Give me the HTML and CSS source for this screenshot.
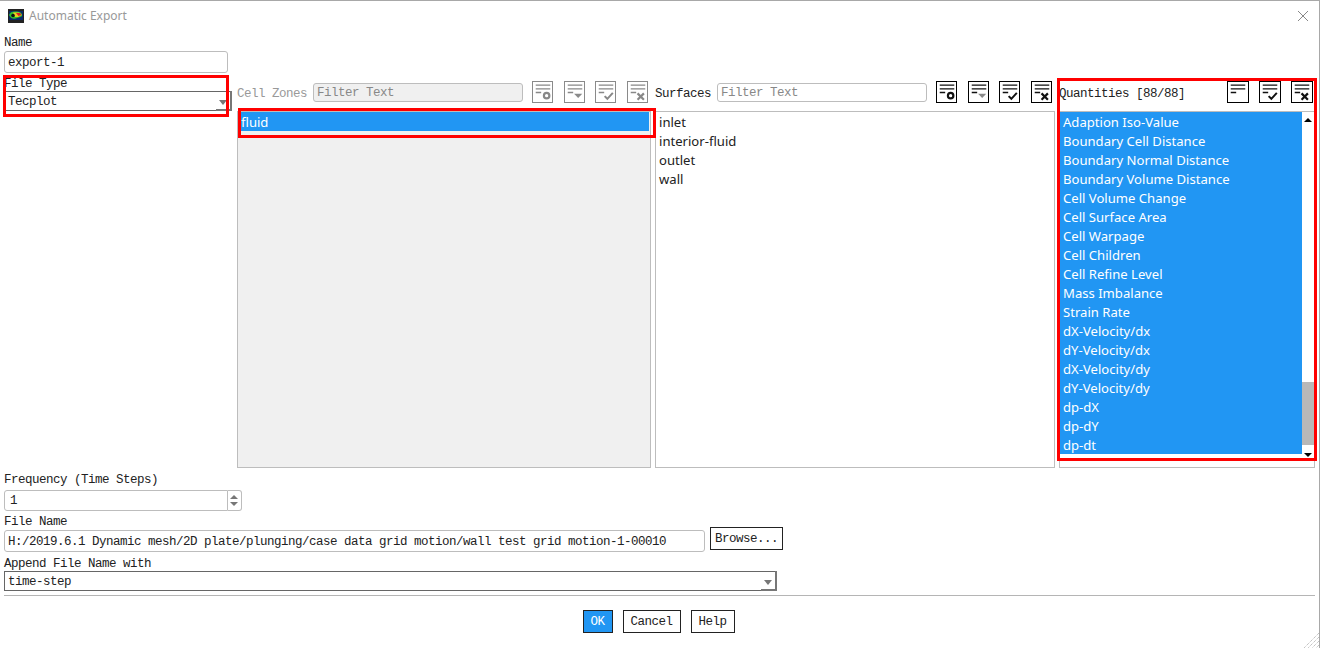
FILE: index.html
```html
<!DOCTYPE html>
<html lang="en">
<head>
<meta charset="utf-8">
<title>Automatic Export</title>
<link rel="stylesheet" href="styles.css">
</head>
<body>
<svg class="defs" width="0" height="0" aria-hidden="true">
  <symbol id="lines" viewBox="0 0 22 22"><path d="M3 3.500h16M3 7.500h16M3 11.500h6" fill="none" stroke="currentColor" stroke-width="1.500"/></symbol>
  <symbol id="i-add" viewBox="0 0 22 22"><use href="#lines"/><circle cx="15" cy="15" r="3" fill="none" stroke="currentColor" stroke-width="2.400"/></symbol>
  <symbol id="i-down" viewBox="0 0 22 22"><use href="#lines"/><path d="M10 13h9l-4.500 4.500z" fill="#8a8a8a"/></symbol>
  <symbol id="i-check" viewBox="0 0 22 22"><use href="#lines"/><path d="M9.500 15.500l3 3 6-6.500" fill="none" stroke="currentColor" stroke-width="2.200"/></symbol>
  <symbol id="i-x" viewBox="0 0 22 22"><use href="#lines"/><path d="M10.500 12.500l7 7M17.500 12.500l-7 7" fill="none" stroke="currentColor" stroke-width="2.400"/></symbol>
  <symbol id="i-none" viewBox="0 0 22 22"><use href="#lines"/></symbol>
</svg>
<div class="dialog">
  <header class="titlebar">
    <svg class="appicon" width="16" height="14" viewBox="0 0 16 14" aria-hidden="true">
      <rect width="16" height="14" fill="#222"/>
      <rect x="1" y="2" width="14" height="9" fill="#0a2a6a"/>
      <path d="M1 6c1-3 4-4 7-3.500 3 0 6 1 6 3.500s-3 2-5 3-6 1.500-8-3z" fill="#2fc02f"/>
      <path d="M5 3.500h6l3 2.500-4 2H7z" fill="#e8d020"/>
      <path d="M8 4h4l1.500 2-3 1z" fill="#e02020"/>
      <circle cx="5" cy="6.500" r="1.800" fill="#111"/>
    </svg>
    <span class="title">Automatic Export</span>
    <svg class="close" width="12" height="12" viewBox="0 0 12 12" aria-hidden="true"><path d="M1 1l10 10M11 1L1 11" stroke="#888" stroke-width="1" fill="none"/></svg>
  </header>

  <div class="main">
    <div class="leftcol">
      <label class="lbl">Name</label>
      <div class="input name">export-1</div>
      <label class="lbl filetype">File Type</label>
      <div class="combo ftcombo">Tecplot<span class="caret"></span></div>
    </div>

    <section class="panel zones">
      <div class="tools">
        <span class="lbl dim">Cell Zones</span>
        <div class="filter off">Filter Text</div>
        <span class="ibtn off"><svg><use href="#i-add"/></svg></span>
        <span class="ibtn off"><svg><use href="#i-down"/></svg></span>
        <span class="ibtn off"><svg><use href="#i-check"/></svg></span>
        <span class="ibtn off"><svg><use href="#i-x"/></svg></span>
      </div>
      <ul class="list grey"><li class="sel">fluid</li></ul>
    </section>

    <section class="panel surfaces">
      <div class="tools">
        <span class="lbl">Surfaces</span>
        <div class="filter">Filter Text</div>
        <span class="ibtn"><svg><use href="#i-add"/></svg></span>
        <span class="ibtn"><svg><use href="#i-down"/></svg></span>
        <span class="ibtn"><svg><use href="#i-check"/></svg></span>
        <span class="ibtn"><svg><use href="#i-x"/></svg></span>
      </div>
      <ul class="list"><li>inlet</li><li>interior-fluid</li><li>outlet</li><li>wall</li></ul>
    </section>

    <section class="panel quantities">
      <div class="tools">
        <span class="lbl grow">Quantities [88/88]</span>
        <span class="ibtn"><svg><use href="#i-none"/></svg></span>
        <span class="ibtn"><svg><use href="#i-check"/></svg></span>
        <span class="ibtn"><svg><use href="#i-x"/></svg></span>
      </div>
      <div class="qbox">
        <ul class="qlist">
          <li>Adaption Iso-Value</li><li>Boundary Cell Distance</li><li>Boundary Normal Distance</li><li>Boundary Volume Distance</li><li>Cell Volume Change</li><li>Cell Surface Area</li><li>Cell Warpage</li><li>Cell Children</li><li>Cell Refine Level</li><li>Mass Imbalance</li><li>Strain Rate</li><li>dX-Velocity/dx</li><li>dY-Velocity/dx</li><li>dX-Velocity/dy</li><li>dY-Velocity/dy</li><li>dp-dX</li><li>dp-dY</li><li>dp-dt</li>
        </ul>
        <div class="scroll">
          <span class="arrow up"></span>
          <span class="thumb"></span>
          <span class="arrow dn"></span>
        </div>
      </div>
    </section>
  </div>

  <div class="lower">
    <label class="lbl">Frequency (Time Steps)</label>
    <div class="spin">
      <div class="input spinval">1</div>
      <div class="spinbtn"><span class="tri-up"></span><span class="tri-dn"></span></div>
    </div>
    <label class="lbl fname">File Name</label>
    <div class="filerow">
      <div class="input path">H:/2019.6.1 Dynamic mesh/2D plate/plunging/case data grid motion/wall test grid motion-1-00010</div>
      <button class="btn browse">Browse...</button>
    </div>
    <label class="lbl append">Append File Name with</label>
    <div class="combo appcombo">time-step<span class="caret"></span></div>
  </div>

  <footer class="footer">
    <button class="btn ok">OK</button>
    <button class="btn cancel">Cancel</button>
    <button class="btn help">Help</button>
  </footer>

  <div class="mark m1"></div>
  <div class="mark m2"></div>
  <div class="mark m3"></div>
  <svg class="grip" width="16" height="16" viewBox="0 0 16 16" aria-hidden="true"><path d="M16 1L1 16M16 5L5 16M16 9L9 16M16 13L13 16" stroke="#aaa" stroke-width="1" stroke-dasharray="1 1" fill="none"/></svg>
</div>
</body>
</html>
```

FILE: styles.css
```css
* { box-sizing: border-box; }
html, body { margin: 0; padding: 0; background: #fff; }
body { width: 1320px; height: 648px; overflow: hidden; }
.defs { position: absolute; }
ul { list-style: none; margin: 0; padding: 0; }

.dialog {
  position: relative;
  width: 1320px;
  height: 648px;
  background: #fff;
  border-top: 1px solid #a8a8a8;
  border-right: 1px solid #a8a8a8;
  font-family: "Liberation Mono", monospace;
  font-size: 12.5px;
  letter-spacing: -0.5px;
  color: #222;
}

.titlebar { display: flex; align-items: center; height: 30px; padding: 0 10px 1px 8px; }
.appicon { flex: none; }
.title { margin-left: 5px; flex: 1; font-family: "Noto Sans", sans-serif; font-size: 12px; letter-spacing: 0; color: #999; }
.close { flex: none; }

.lbl { display: block; height: 14px; line-height: 16px; white-space: nowrap; }
.dim { color: #999; }
.grow { flex: 1; }

.main { display: flex; height: 441px; padding-left: 4px; padding-top: 4px; }
.leftcol { width: 233px; flex: none; }

.input {
  border: 1px solid #bdbdbd;
  border-radius: 3px;
  background: #fff;
  padding-left: 3px;
  white-space: nowrap;
  overflow: hidden;
}
.name { width: 224px; height: 22px; margin-top: 2px; line-height: 22px; }
.filetype { margin-top: 3px; }

.combo {
  position: relative;
  border: 1px solid #666;
  border-width: 1px 0 1px 1px;
  padding-left: 3px;
  line-height: 21px;
  background: #fff;
}
.caret {
  position: absolute;
  right: 0;
  top: -1px;
  bottom: -1px;
  width: 16px;
  border-right: 2px solid #777;
  border-bottom: 2px solid #777;
}
.caret::after {
  content: "";
  position: absolute;
  right: 3px;
  top: 9px;
  border: 4px solid transparent;
  border-top: 5px solid #777;
  border-bottom: 0;
}
.ftcombo { width: 228px; height: 20px; margin-top: 1px; }

.panel { display: flex; flex-direction: column; flex: none; margin-right: 4px; margin-top: 46px; }
.zones { width: 414px; }
.surfaces { width: 400px; }
.quantities { width: 256px; margin-right: 0; }

.tools { display: flex; align-items: center; gap: 10.67px; height: 22px; margin-bottom: 8px; }
.tools .lbl { margin-top: 2px; margin-right: -10.67px; }
.tools .grow { margin-right: 0; }
.filter {
  height: 19px;
  margin-top: 1px;
  border: 1px solid #bdbdbd;
  border-radius: 3px;
  color: #888;
  padding-left: 3px;
  line-height: 19px;
  margin-left: 6px;
  margin-right: -2px;
  flex: 1;
}
.filter.off { background: #f0f0f0; }
.ibtn {
  flex: none;
  width: 21px;
  height: 22px;
  border: 1px solid #000;
  color: #111;
}
.ibtn:last-child { margin-right: 3px; }
.ibtn svg { display: block; width: 20px; height: 20px; }
.ibtn.off { border-color: #8a8a8a; color: #888; }
.quantities .tools { gap: 10px; }
.quantities .ibtn { width: 22px; }
.quantities .ibtn:last-child { margin-right: 2px; }

.list {
  height: 357px;
  border: 1px solid #bdbdbd;
  padding: 1px 0 0 0;
  font-family: "Noto Sans", sans-serif;
  font-size: 13.1px;
  letter-spacing: 0;
  line-height: 19px;
  color: #222;
}
.list li { padding-left: 3px; }
.list.grey { background: #f0f0f0; padding: 0 1px 0 2px; }
.list .sel { background: #2196f3; color: #fff; height: 19px; line-height: 19px; padding: 1px 0 0 1px; }

.qbox {
  display: flex;
  height: 357px;
  border: 1px solid #bdbdbd;
  font-family: "Noto Sans", sans-serif;
  font-size: 13.1px;
  letter-spacing: 0;
  line-height: 19px;
}
.qlist {
  width: 242px;
  height: 342px;
  background: #2196f3;
  color: #fff;
  padding-top: 1px;
}
.qlist li { padding-left: 3px; white-space: nowrap; }
.scroll { position: relative; flex: 1; height: 347px; }
.thumb { position: absolute; left: 0; right: 0; top: 270px; height: 63px; background: #b8b8b8; }
.arrow { position: absolute; left: 2px; border: 4px solid transparent; }
.up { top: 6px; border-top: 0; border-bottom: 4px solid #000; }
.dn { top: 341px; border-bottom: 0; border-top: 4px solid #000; }

.lower { padding: 0 0 0 4px; }
.spin { display: flex; width: 238px; height: 21px; margin-top: 4px; }
.spinval { flex: 1; line-height: 21px; border-radius: 3px 0 0 3px; padding-left: 5px; }
.spinbtn {
  position: relative;
  width: 14px;
  border: 1px solid #bdbdbd;
  border-left: 0;
  border-radius: 0 3px 3px 0;
}
.tri-up, .tri-dn { position: absolute; left: 2px; border: 4px solid transparent; }
.tri-up { top: 4px; border-top: 0; border-bottom: 4px solid #777; }
.tri-dn { top: 11px; border-bottom: 0; border-top: 4px solid #777; }

.fname { margin-top: 3px; }
.filerow { display: flex; align-items: flex-start; height: 26px; }
.path { width: 701px; height: 22px; margin-top: 2px; line-height: 22px; }
.btn {
  font-family: "Liberation Mono", monospace;
  font-size: 12.5px;
  letter-spacing: -0.5px;
  color: #222;
  background: #fff;
  border: 1px solid #222;
  border-radius: 0;
  padding: 0;
  height: 23px;
}
.browse { width: 73px; margin-left: 5px; margin-top: -1px; padding-top: 1px; }
.append { margin-top: 2px; }
.appcombo { width: 773px; height: 20px; margin-top: 1px; }

.footer {
  display: flex;
  justify-content: center;
  gap: 10px;
  margin: 4px 4px 0 4px;
  padding: 14px 2px 0 0;
  border-top: 1px solid #b5b5b5;
}
.ok { width: 30px; background: #2196f3; color: #fff; }
.cancel { width: 58px; }
.help { width: 44px; }

.mark { position: absolute; border: 3px solid #f00; pointer-events: none; }
.m1 { left: 3px; top: 74px; width: 226px; height: 42px; }
.m2 { left: 238px; top: 107px; width: 418px; height: 30px; }
.m3 { left: 1057px; top: 77px; width: 260px; height: 383px; }
.grip { position: absolute; right: 0; bottom: 0; }
```
